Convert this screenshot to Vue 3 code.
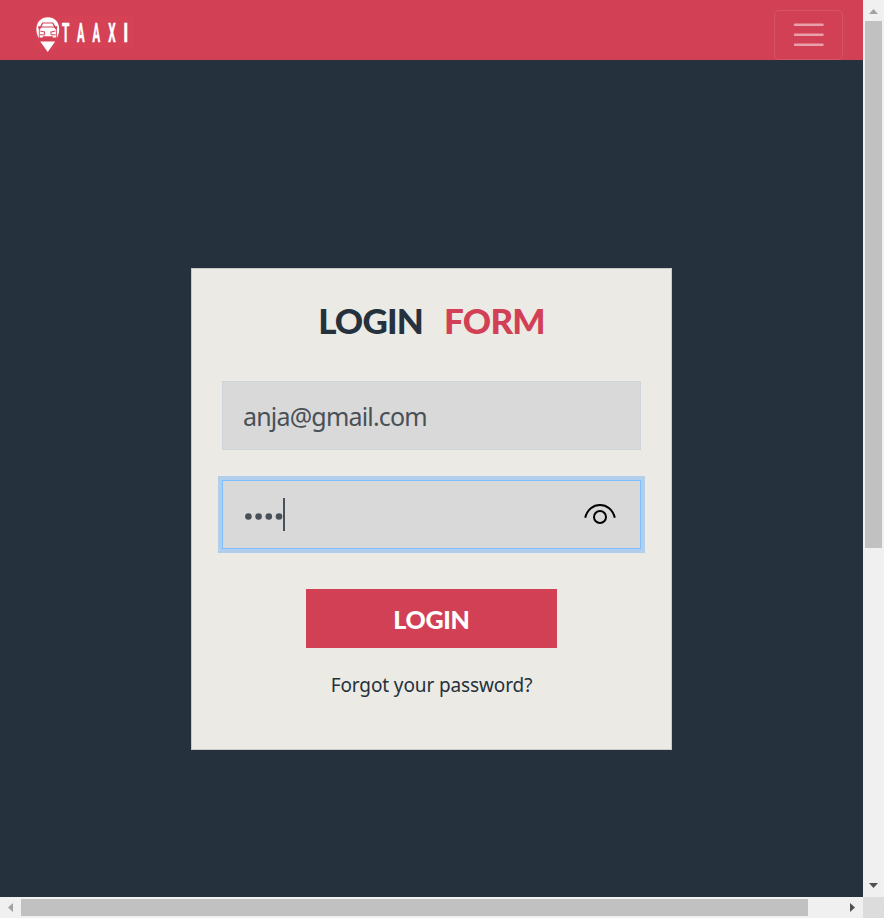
<script setup>
import { ref } from 'vue'

const email = ref('anja@gmail.com')
const password = ref('anja')
const letters = [
  { char: 'T', x: 61.9, width: 7.4 },
  { char: 'A', x: 77, width: 7.6 },
  { char: 'A', x: 92.6, width: 7.6 },
  { char: 'X', x: 108.2, width: 7.4 },
  { char: 'I', x: 123.3, width: 5 }
]
</script>

<template>
  <div class="window">
    <main class="page">
      <header class="navbar">
        <svg class="brand" width="140" height="60" viewBox="0 0 140 60" role="img">
          <rect x="36" y="15" width="98" height="34" fill="#d54155" />
          <path d="M40.2 41.5H55.2L47.7 52Z" fill="#fff" />
          <path d="M38.8 38C37.2 35.4 36.4 32.2 36.4 29C36.4 22 41.2 17.2 47.8 17.2S59.2 22 59.2 29C59.2 32.2 58.4 35.4 56.8 38Z" fill="#fff" />
          <path d="M42.2 22.4H53.2L55.2 26.2H57.2V28L56.8 29V39H38.8V29L38.2 28V26.2H40.3Z" fill="#d54155" />
          <path d="M43 23.6H52.4L53.8 26.5H41.7Z" fill="#fff" />
          <path d="M41.6 27.5H54L55.9 29.6V37.5H52.8V36.3H42.8V37.5H39.7V29.6Z" fill="#fff" />
          <path d="M40.3 31L44.3 32M55.3 31L51.3 32M40 34.8H44.6V31.4M55.6 34.8H51V31.4" fill="none" stroke="#d54155" stroke-width="1" />
          <text
            v-for="letter in letters"
            :key="letter.x"
            :x="letter.x"
            y="42"
            :textLength="letter.width"
            lengthAdjust="spacingAndGlyphs"
            class="brand-letter"
          >{{ letter.char }}</text>
        </svg>
        <button class="toggler" type="button" aria-label="Menu">
          <svg width="37.5" height="37.5" viewBox="0 0 30 30">
            <path d="M4 7h22M4 15h22M4 23h22" stroke="rgba(255,255,255,.5)" stroke-width="2" stroke-linecap="round" />
          </svg>
        </button>
      </header>

      <section class="stage">
        <form class="card" @submit.prevent>
          <h1 class="title"><span>LOGIN</span><span class="accent">FORM</span></h1>
          <div class="field"><span class="email">{{ email }}</span></div>
          <div class="field focused">
            <svg class="dots" width="39" height="9" viewBox="0 0 39 9">
              <circle v-for="n in password.length" :key="n" :cx="n * 10.2 - 5.8" cy="4.5" r="3.3" fill="#495057" />
            </svg>
            <span class="caret"></span>
            <svg class="eye" width="32" height="24" viewBox="0 0 32 24" fill="none" stroke="#000" stroke-width="2">
              <path d="M1.2 14.8C3.2 6.4 9.4 2.1 16 2.1S28.8 6.4 30.8 14.8" />
              <circle cx="16" cy="14" r="6" />
            </svg>
          </div>
          <button class="submit" type="submit"><span>LOGIN</span></button>
          <a class="forgot">Forgot your password?</a>
        </form>
      </section>
    </main>

    <div class="bar vertical">
      <svg width="21" height="21" viewBox="0 0 21 21"><path d="M6 14L10.5 9L15 14Z" fill="#a3a3a3" /></svg>
      <div class="thumb"></div>
      <svg class="end" width="21" height="21" viewBox="0 0 21 21"><path d="M6 7L10.5 12L15 7Z" fill="#505050" /></svg>
    </div>
    <div class="bar horizontal">
      <svg width="21" height="21" viewBox="0 0 21 21"><path d="M13 6L8 10.5L13 15Z" fill="#a3a3a3" /></svg>
      <div class="thumb"></div>
      <svg class="end" width="21" height="21" viewBox="0 0 21 21"><path d="M8 6L13 10.5L8 15Z" fill="#505050" /></svg>
    </div>
    <div class="corner"></div>
  </div>
</template>

<style>
body { margin: 0; overflow: hidden; }
</style>

<style scoped>
* { box-sizing: border-box; }
.window {
  display: grid;
  grid-template: 897px 21px / 863px 21px;
  width: 884px;
  height: 918px;
  font-family: "Segoe UI", "Noto Sans", "Open Sans", sans-serif;
}
.page { display: flex; flex-direction: column; background: #25313d; }
.navbar {
  display: flex;
  justify-content: space-between;
  height: 60px;
  padding-right: 20px;
  background: #d24055;
}
.brand { display: block; }
.brand-letter {
  font: 700 25px Roboto, sans-serif;
  fill: #fff;
  stroke: #fff;
  stroke-width: .5px;
}
.toggler {
  display: flex;
  align-items: center;
  justify-content: center;
  width: 69px;
  height: 50px;
  margin-top: 10px;
  padding: 0;
  background: transparent;
  border: 1px solid rgba(255, 255, 255, .1);
  border-radius: 5px;
}
.stage { display: flex; justify-content: center; padding-top: 208px; }
.card {
  display: flex;
  flex-direction: column;
  align-items: center;
  width: 481px;
  height: 482px;
  padding: 0 30px;
  background: #ebeae4;
  border: 1px solid #c9cac6;
}
.title {
  display: flex;
  gap: 21px;
  margin: 30px 0 40px;
  height: 42px;
  line-height: 42px;
  font-family: "Segoe UI", Lato, sans-serif;
  font-size: 35px;
  font-weight: 900;
  letter-spacing: -.8px;
  color: #25313d;
}
.accent { color: #d24055; }
.field {
  display: flex;
  align-items: center;
  flex: none;
  width: 419px;
  height: 69px;
  padding: 0 24px 0 21px;
  background: #d9d9d9;
  border: 1px solid #ced4da;
  color: #495057;
  font-size: 25px;
}
.email { letter-spacing: -.82px; padding-top: 1px; margin-left: -1px; }
.focused {
  margin-top: 30px;
  border-color: #80bdff;
  box-shadow: 0 0 0 4px #b1cfec;
}
.dots { margin-top: 4px; }
.caret { width: 2px; height: 33px; background: #495057; }
.eye { margin-left: auto; }
.submit {
  flex: none;
  width: 251px;
  height: 59px;
  margin-top: 40px;
  padding: 1px 0 0;
  border: 0;
  background: #d24055;
  color: #fff;
  font: 900 25px "Segoe UI", Lato, sans-serif;
  letter-spacing: -.3px;
}
.forgot {
  margin-top: 23px;
  font-size: 19px;
  line-height: 28px;
  letter-spacing: -.12px;
  color: #25313d;
  white-space: nowrap;
}
.bar { display: flex; background: #f0f0f0; }
.bar svg { display: block; flex: none; }
.vertical { flex-direction: column; align-items: center; }
.vertical .thumb { width: 17px; height: 527px; }
.vertical .end { margin-top: auto; }
.horizontal { align-items: center; }
.horizontal .thumb { width: 787px; height: 17px; }
.horizontal .end { margin-left: auto; }
.thumb { background: #c1c1c1; }
.corner { background: #dcdcdc; }
</style>
